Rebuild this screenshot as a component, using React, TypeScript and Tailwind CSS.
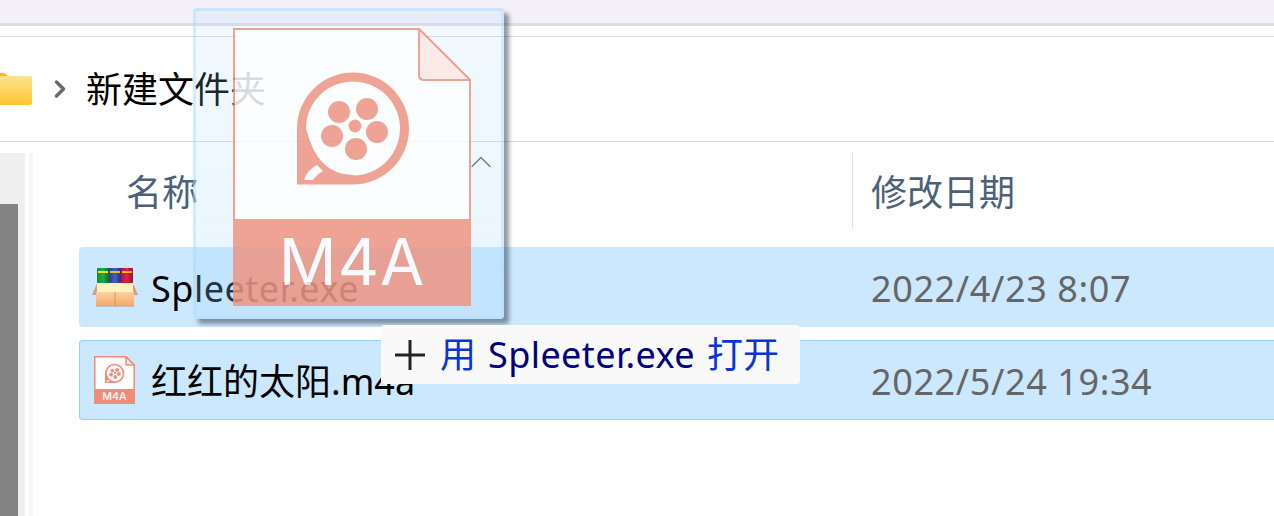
import React from 'react';
import { ChevronRight, ChevronUp } from 'lucide-react';

const CJK = { fontFamily: '"Noto Sans", "Noto Sans CJK SC", sans-serif' };

const FileIcon: React.FC<{ className?: string; small?: boolean }> = ({ className, small }) => {
  const line = small ? 9 : 2;
  const inset = line / 2;
  const tint = small ? '#f08d78' : '#ef937f';
  return (
    <svg viewBox="0 0 238 278" className={className}>
      <path d={`M${inset} ${inset}H186L${238 - inset} 52V278H${inset}Z`} fill="#fff" stroke={tint} strokeWidth={line} />
      <path d={`M186 ${inset}V47Q186 52 191 52H${238 - inset}Z`} fill="#fce8e4" stroke={tint} strokeWidth={line} strokeLinejoin="round" />
      <rect x="0" y="191" width="238" height="87" fill={tint} />
      <path
        fillRule="evenodd"
        fill={tint}
        d="M64 156V100.5A56 56 0 1 1 120 156.5L64 156.5ZM120 53.5A47 47 0 1 0 120 147.5A47 47 0 1 0 120 53.5Z"
      />
      <circle cx="106" cy="84" r="11" fill={tint} />
      <circle cx="134" cy="81" r="11" fill={tint} />
      <circle cx="144" cy="104" r="11" fill={tint} />
      <circle cx="123" cy="121" r="11" fill={tint} />
      <circle cx="99" cy="108" r="11" fill={tint} />
      <circle cx="122" cy="98" r="6.5" fill={tint} />
      <path d="M64 100V156H120V147Q84 147 73 100Z" fill={tint} />
      <path d="M71 152Q75 141 84 137L90 143Q83 147 80 152Z" fill="#fff" />
      <text
        x="119"
        y="257"
        textAnchor="middle"
        fill="#fff"
        fontSize={small ? 62 : 64}
        fontWeight={small ? 500 : 400}
        letterSpacing={small ? 0 : 1}
        fontFamily="Inter, sans-serif"
      >
        M4A
      </text>
    </svg>
  );
};

const ArchiveIcon = () => (
  <svg viewBox="0 0 46 39" className="w-[46px] h-[39px] shrink-0">
    <defs>
      <linearGradient id="bookGreen" x1="0" y1="0" x2="1" y2="0">
        <stop offset="0" stopColor="#0f8a35" />
        <stop offset="0.5" stopColor="#19b04a" />
        <stop offset="1" stopColor="#0b6f2a" />
      </linearGradient>
      <linearGradient id="bookBlue" x1="0" y1="0" x2="1" y2="0">
        <stop offset="0" stopColor="#2f3a96" />
        <stop offset="0.5" stopColor="#4d5cc4" />
        <stop offset="1" stopColor="#262e80" />
      </linearGradient>
      <linearGradient id="bookRed" x1="0" y1="0" x2="1" y2="0">
        <stop offset="0" stopColor="#b8123a" />
        <stop offset="0.5" stopColor="#e0204a" />
        <stop offset="1" stopColor="#98102e" />
      </linearGradient>
      <linearGradient id="boxFront" x1="0" y1="0" x2="0" y2="1">
        <stop offset="0" stopColor="#fcd0a0" />
        <stop offset="1" stopColor="#f4a868" />
      </linearGradient>
    </defs>
    <path d="M5 16V1Q5 0 6 0H17V16Z" fill="url(#bookGreen)" />
    <rect x="17" y="0" width="12" height="16" fill="url(#bookBlue)" />
    <path d="M29 0H40Q41 0 41 1V16H29Z" fill="url(#bookRed)" />
    <rect x="6" y="3" width="10" height="2" fill="#f2e21f" />
    <rect x="18" y="3" width="10" height="2" fill="#f5b51f" />
    <rect x="30" y="3" width="10" height="2" fill="#f5b51f" />
    <path d="M5 15H41L46 27H42V24H4V27H0Z" fill="#d9a078" />
    <path d="M5 15H41V24H5Z" fill="#fdf1bd" />
    <rect x="4" y="24" width="38" height="14" fill="url(#boxFront)" />
    <rect x="22.5" y="24" width="1" height="14" fill="#d98f58" />
    <rect x="4" y="38" width="38" height="1" fill="#b9bcc9" />
  </svg>
);

const Folder = () => (
  <svg viewBox="0 0 32 32" className="w-8 h-8 shrink-0">
    <defs>
      <linearGradient id="folderFill" x1="0" y1="0" x2="0" y2="1">
        <stop offset="0" stopColor="#ffe38e" />
        <stop offset="1" stopColor="#fcc631" />
      </linearGradient>
    </defs>
    <path d="M0 0H3Q6 0 8 3H0Z" fill="#fdb813" />
    <path d="M0 3H30Q32 3 32 5V30Q32 32 30 32H0Z" fill="url(#folderFill)" />
  </svg>
);

const rows = [
  { name: 'Spleeter.exe', date: '2022/4/23 8:07', selected: false },
  { name: '红红的太阳.m4a', date: '2022/5/24 19:34', selected: true },
];

export default function App() {
  return (
    <div className="relative w-[1274px] h-[516px] overflow-hidden bg-white text-[36px] leading-none text-black" style={CJK}>
      <div className="h-[26px] bg-[#f3f1f7] border-b-[3px] border-[#e0dee5]" />
      <div className="mt-[10px] h-[106px] border-y border-[#d9d9d9] flex items-center">
        <Folder />
        <ChevronRight className="ml-[14px] w-7 h-7 text-[#6b6b6b]" strokeWidth={3} />
        <span className="ml-[12px] pt-[2px] text-[36px]">新建文件夹</span>
      </div>

      <div className="flex h-[374px]">
        <div className="w-[25px] mt-[11px] bg-[#efefef]">
          <div className="w-[18px] mt-[51px] h-full bg-[#838383]" />
        </div>
        <div className="w-1 ml-1 mt-[11px] bg-[#f5f5f5]" />
        <div className="flex-1 pt-[11px] pl-[46px]">
          <div className="flex h-[76px] text-[#4c607a] text-[36px]">
            <div className="w-[774px] pl-[47px] pt-[22px] border-r border-[#e5e5e5]">名称</div>
            <div className="pl-[18px] pt-[22px]">修改日期</div>
          </div>
          <div className="mt-[18px] flex flex-col gap-[13px]">
            {rows.map((row) => (
              <div
                key={row.name}
                className={`flex items-center h-[80px] rounded-l-sm bg-[#cce8ff] border border-r-0 ${row.selected ? 'border-[#99d1ff]' : 'border-transparent'}`}
              >
                <div className="w-[69px] flex justify-center">
                  {row.name.endsWith('.exe') ? <ArchiveIcon /> : <FileIcon small className="w-[41px] h-[48px] shrink-0" />}
                </div>
                <span className={`ml-[2px] w-[720px] pt-[3px] text-[36px] ${row.selected ? '' : 'tracking-[0.5px]'}`}>{row.name}</span>
                <span className="text-[#666] pt-[3px] text-[36px] tracking-[0.6px]">{row.date}</span>
              </div>
            ))}
          </div>
        </div>
      </div>

      {/* drag ghost */}
      <div className="absolute left-[193px] top-[8px] w-[311px] h-[311px] rounded bg-linear-to-b from-[#a7d9ff]/15 to-[#a7d9ff]/25 border-[3px] border-[#a7d9ff]/40 shadow-[5px_5px_4px_rgba(60,70,85,0.55)] pl-[37px] pt-[17px]">
        <FileIcon className="w-[238px] h-[278px] opacity-[0.83]" />
      </div>
      <ChevronUp className="absolute left-[463px] top-[144px] w-9 h-9 text-[#6d7780]" strokeWidth={0.8} />

      {/* drop tooltip */}
      <div className="absolute left-[381px] top-[325px] w-[419px] h-[59px] bg-[#f9f9f9] rounded-sm flex items-center pl-[14px]">
        <svg viewBox="0 0 30 30" className="w-[30px] h-[30px] shrink-0">
          <path d="M15 0V30M0 15H30" stroke="#222" strokeWidth="3" fill="none" />
        </svg>
        <span className="ml-[15px] text-[36px] text-[#0a35d4]">用</span>
        <span className="ml-[12px] text-[36px] text-[#00007a] tracking-[0.4px]">Spleeter.exe</span>
        <span className="ml-[12px] text-[36px] text-[#0a35d4]">打开</span>
      </div>
    </div>
  );
}
